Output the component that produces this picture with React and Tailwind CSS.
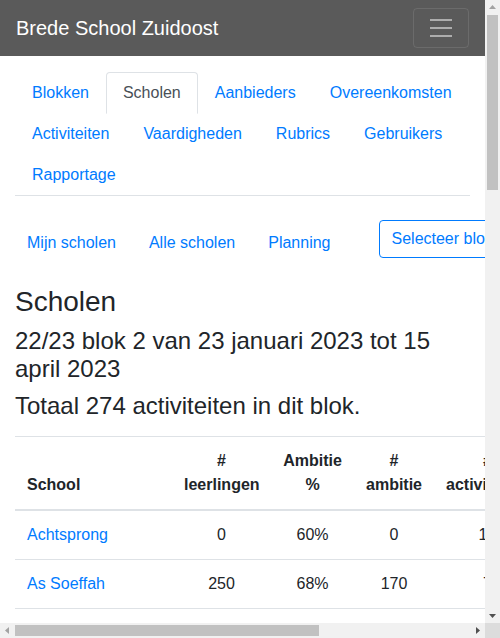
import React from 'react';

const tabs = [
  { id: 'blokken', label: 'Blokken' },
  { id: 'scholen', label: 'Scholen' },
  { id: 'aanbieders', label: 'Aanbieders' },
  { id: 'overeenkomsten', label: 'Overeenkomsten' },
  { id: 'activiteiten', label: 'Activiteiten' },
  { id: 'vaardigheden', label: 'Vaardigheden' },
  { id: 'rubrics', label: 'Rubrics' },
  { id: 'gebruikers', label: 'Gebruikers' },
  { id: 'rapportage', label: 'Rapportage' },
];

const schools = [
  ['Achtsprong', 0, '60%', 0, 14, '0%', 0],
  ['As Soeffah', 250, '68%', 170, 7, '4%', 21],
  ['Bijlmerhorst', 310, '55%', 171, 12, '7%', 36],
  ['De Bonte Kraai', 198, '62%', 123, 9, '7%', 27],
  ['De Catamaran', 402, '70%', 281, 15, '5%', 45],
  ['De Polsstok', 225, '58%', 131, 8, '6%', 24],
  ['Het Gein', 188, '65%', 122, 6, '5%', 18],
  ['De Grote Beer', 276, '60%', 166, 11, '7%', 33],
  ['Haydn', 150, '64%', 96, 5, '5%', 15],
  ['Karel Doorman', 343, '57%', 196, 13, '7%', 39],
  ['De Kameleon', 212, '66%', 140, 7, '5%', 21],
  ['Klimop', 164, '61%', 100, 6, '6%', 18],
  ['De Kraal', 298, '63%', 188, 10, '5%', 30],
  ['Medemblik', 187, '59%', 110, 7, '6%', 21],
  ['Nelson Mandela', 356, '69%', 246, 14, '6%', 42],
];

const columns = [
  { key: 'school', top: '', bottom: 'School', width: 'w-[157px]', align: 'text-left' },
  { key: 'leerlingen', top: '#', bottom: 'leerlingen', width: 'w-[99px]', align: 'text-center' },
  { key: 'ambitiepct', top: 'Ambitie', bottom: '%', width: 'w-[83px]', align: 'text-center' },
  { key: 'ambitie', top: '#', bottom: 'ambitie', width: 'w-[80px]', align: 'text-center' },
  { key: 'activiteiten', top: '#', bottom: 'activiteiten', width: 'w-[107px]', align: 'text-center' },
  { key: 'behaald', top: 'Behaald', bottom: '%', width: 'w-[85px]', align: 'text-center' },
  { key: 'uren', top: '#', bottom: 'uren', width: 'w-[100px]', align: 'text-center' },
];

const Navbar = () => (
  <nav className="h-14 shrink-0 bg-[#5a5a5a] px-4 py-2 flex items-center justify-between">
    <a href="#" className="text-xl leading-[30px] text-white">Brede School Zuidoost</a>
    <button className="w-14 h-10 px-3 py-1 border border-white/10 rounded flex items-center justify-center">
      <svg width="30" height="30" viewBox="0 0 30 30">
        <path d="M4 7h22M4 15h22M4 23h22" stroke="rgba(255,255,255,0.5)" strokeWidth="2" />
      </svg>
    </button>
  </nav>
);

const Tabs = ({ active }) => (
  <ul className="flex flex-wrap border-b border-[#dee2e6]">
    {tabs.map((tab) => {
      const isActive = tab.id === active;
      return (
        <li key={tab.id} className="-mb-px">
          <a
            href="#"
            className={
              isActive
                ? 'block px-4 py-2 border border-[#dee2e6] border-b-white rounded-t bg-white text-[#495057]'
                : 'block px-4 py-2 border border-transparent rounded-t text-[#007bff]'
            }
          >
            {tab.label}
          </a>
        </li>
      );
    })}
  </ul>
);

const SubNav = () => (
  <div className="mt-6 flex items-start">
    <ul className="flex shrink-0 gap-[1px] -ml-1 pt-[3px]">
      {['Mijn scholen', 'Alle scholen', 'Planning'].map((label) => (
        <li key={label} className="shrink-0">
          <a href="#" className="block px-4 py-2 whitespace-nowrap text-[#007bff]">{label}</a>
        </li>
      ))}
    </ul>
    <button className="ml-[32px] shrink-0 whitespace-nowrap h-[38px] px-3 border border-[#007bff] rounded text-[#007bff] flex items-center">
      Selecteer blok
      <span className="ml-1 inline-block w-0 h-0 border-x-[5px] border-x-transparent border-t-[5px] border-t-[#007bff]" />
    </button>
  </div>
);

const SchoolTable = () => (
  <table className="table-fixed border-collapse w-[711px] shrink-0 mt-[15px] mb-4 text-[#212529]">
    <thead>
      <tr>
        {columns.map((col) => (
          <th
            key={col.key}
            className={`${col.width} ${col.align} p-3 align-bottom font-bold border-t border-b-2 border-[#dee2e6]`}
          >
            {col.top && <div>{col.top}</div>}
            <div>{col.bottom}</div>
          </th>
        ))}
      </tr>
    </thead>
    <tbody>
      {schools.map((row) => (
        <tr key={row[0]}>
          <td className="p-3 border-t border-[#dee2e6]">
            <a href="#" className="text-[#007bff]">{row[0]}</a>
          </td>
          {row.slice(1).map((val, i) => (
            <td key={i} className="p-3 text-center border-t border-[#dee2e6]">{val}</td>
          ))}
        </tr>
      ))}
    </tbody>
  </table>
);

// arrow glyphs of the window scrollbars
const Arrow = ({ dir, color }) => {
  const points = {
    up: '4,9 11,9 7.5,5',
    down: '4,6 11,6 7.5,10',
    left: '9,4 9,11 5,7.5',
    right: '6,4 6,11 10,7.5',
  }[dir];
  return (
    <svg width="15" height="15" viewBox="0 0 15 15">
      <polygon points={points} fill={color} />
    </svg>
  );
};

export default function App() {
  return (
    <div className="w-[500px] h-[638px] overflow-hidden grid grid-cols-[485px_15px] grid-rows-[623px_15px] font-['Liberation_Sans',Arial,sans-serif] text-base leading-6 text-[#212529] bg-white">
      {/* page */}
      <div className="overflow-hidden flex flex-col">
        <Navbar />
        <div className="px-[15px] mt-4">
          <Tabs active="scholen" />
          <SubNav />
          <h3 className="mt-[22px] mb-2 text-[28px] leading-[1.2] font-medium">Scholen</h3>
          <h4 className="mb-2 text-2xl leading-[1.2] font-medium">22/23 blok 2 van 23 januari 2023 tot 15 april 2023</h4>
          <h4 className="mb-2 text-2xl leading-[1.2] font-medium">Totaal 274 activiteiten in dit blok.</h4>
          <SchoolTable />
        </div>
      </div>

      {/* vertical scrollbar */}
      <div className="bg-[#f1f1f1] flex flex-col">
        <div className="h-[15px] shrink-0"><Arrow dir="up" color="#a3a3a3" /></div>
        <div className="h-[175px] mx-[2px] shrink-0 bg-[#c1c1c1]" />
        <div className="flex-1" />
        <div className="h-[15px] shrink-0"><Arrow dir="down" color="#505050" /></div>
      </div>

      {/* horizontal scrollbar */}
      <div className="bg-[#f1f1f1] flex">
        <div className="w-[15px] shrink-0"><Arrow dir="left" color="#a3a3a3" /></div>
        <div className="w-[304px] my-[2px] shrink-0 bg-[#c1c1c1]" />
        <div className="flex-1" />
        <div className="w-[15px] shrink-0"><Arrow dir="right" color="#505050" /></div>
      </div>

      <div className="bg-[#dcdcdc]" />
    </div>
  );
}
